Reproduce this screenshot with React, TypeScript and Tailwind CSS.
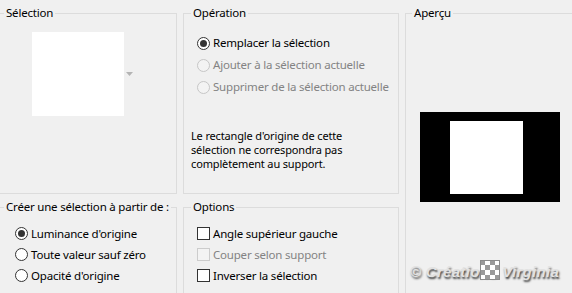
import React from "react";

const ui = "font-['Noto_Sans',sans-serif] text-[11.5px] leading-[16px] tracking-[-0.2px] whitespace-nowrap";

function Radio({ checked, disabled, label }: { checked?: boolean; disabled?: boolean; label: string }) {
  return (
    <div className="flex items-center gap-[3px]">
      <span
        className={`flex h-[13px] w-[13px] items-center justify-center rounded-full border ${
          disabled ? "border-[#c6c6c6] bg-[#f3f3f3]" : "border-[#333333] bg-white"
        }`}
      >
        {checked && <span className="h-[7px] w-[7px] rounded-full bg-[#333333]" />}
      </span>
      <span className={disabled ? "text-[#838383]" : "text-black"}>{label}</span>
    </div>
  );
}

function Check({ disabled, label }: { disabled?: boolean; label: string }) {
  return (
    <div className="flex items-center gap-[3px]">
      <span
        className={`h-[13px] w-[13px] border ${
          disabled ? "border-[#cccccc] bg-[#f3f3f3]" : "border-[#333333] bg-white"
        }`}
      />
      <span className={disabled ? "text-[#838383]" : "text-black"}>{label}</span>
    </div>
  );
}

export default function App() {
  return (
    <div className={`h-[293px] w-[572px] overflow-hidden bg-[#f0f0f0] ${ui}`}>
      <div className="ml-[-2px] grid grid-cols-[179px_216px_200px] grid-rows-[189px_120px] gap-x-[6px] gap-y-[5px] pt-[5px]">
        {/* Sélection */}
        <fieldset className="border border-[#dcdcdc]">
          <legend className="ml-[5px] px-[2px]">Sélection</legend>
          <div className="ml-[33px] mt-[11px] flex items-center">
            <div className="h-[84px] w-[92px] bg-white" />
            <svg width="7" height="4" viewBox="0 0 7 4" className="ml-[2px]">
              <path d="M0 0h7L3.5 4z" fill="#b4b4b4" />
            </svg>
          </div>
        </fieldset>

        {/* Opération */}
        <fieldset className="border border-[#dcdcdc]">
          <legend className="ml-[7px] px-[2px]">Opération</legend>
          <div className="mt-[11px] flex flex-col pl-[13px]">
            <div className="flex h-[22px] items-center">
              <Radio checked label="Remplacer la sélection" />
            </div>
            <div className="flex h-[22px] items-center">
              <Radio disabled label="Ajouter à la sélection actuelle" />
            </div>
            <div className="flex h-[22px] items-center">
              <Radio disabled label="Supprimer de la sélection actuelle" />
            </div>
          </div>
          <p className="mt-[31px] pl-[7px] text-[11px] leading-[14px] tracking-[-0.15px]">
            Le rectangle d'origine de cette
            <br />
            sélection ne correspondra pas
            <br />
            complètement au support.
          </p>
        </fieldset>

        {/* Aperçu */}
        <fieldset className="row-span-2 border border-[#dcdcdc]">
          <legend className="ml-[6px] px-[2px]">Aperçu</legend>
          <div className="ml-[14px] mt-[91px] flex h-[90px] w-[140px] items-center bg-black pl-[30px]">
            <div className="h-[73px] w-[73px] bg-white" />
          </div>
          <div className="relative ml-[4px] mt-[60px] w-[160px]">
            <span className="font-['Liberation_Sans',sans-serif] text-[15px] font-bold italic leading-[20px] tracking-[0.3px] text-[#e2e2e2] [text-shadow:1px_2px_2px_rgba(0,0,0,0.75)]">
              © Créations Virginia
            </span>
            <svg
              width="20"
              height="20"
              viewBox="0 0 20 20"
              className="absolute left-[70px] top-[-2px]"
            >
              <rect x="0" y="0" width="20" height="20" fill="#ffffff" />
              <rect x="0" y="0" width="5" height="5" fill="#9a9a9a" />
              <rect x="10" y="0" width="5" height="5" fill="#9a9a9a" />
              <rect x="5" y="5" width="5" height="5" fill="#9a9a9a" />
              <rect x="15" y="5" width="5" height="5" fill="#9a9a9a" />
              <rect x="0" y="10" width="5" height="5" fill="#9a9a9a" />
              <rect x="10" y="10" width="5" height="5" fill="#9a9a9a" />
              <rect x="5" y="15" width="5" height="5" fill="#9a9a9a" />
              <rect x="15" y="15" width="5" height="5" fill="#9a9a9a" />
              <rect x="0.5" y="0.5" width="19" height="19" fill="none" stroke="#8a8a8a" />
            </svg>
          </div>
        </fieldset>

        {/* Créer une sélection */}
        <fieldset className="border border-[#dcdcdc]">
          <legend className="ml-[5px] px-[2px]">Créer une sélection à partir de :</legend>
          <div className="mt-[8px] flex flex-col pl-[16px]">
            <div className="flex h-[21px] items-center">
              <Radio checked label="Luminance d'origine" />
            </div>
            <div className="flex h-[21px] items-center">
              <Radio label="Toute valeur sauf zéro" />
            </div>
            <div className="flex h-[21px] items-center">
              <Radio label="Opacité d'origine" />
            </div>
          </div>
        </fieldset>

        {/* Options */}
        <fieldset className="border border-[#dcdcdc]">
          <legend className="ml-[7px] px-[2px]">Options</legend>
          <div className="mt-[8px] flex flex-col pl-[13px]">
            <div className="flex h-[21px] items-center">
              <Check label="Angle supérieur gauche" />
            </div>
            <div className="flex h-[21px] items-center">
              <Check disabled label="Couper selon support" />
            </div>
            <div className="flex h-[21px] items-center">
              <Check label="Inverser la sélection" />
            </div>
          </div>
        </fieldset>
      </div>
    </div>
  );
}
